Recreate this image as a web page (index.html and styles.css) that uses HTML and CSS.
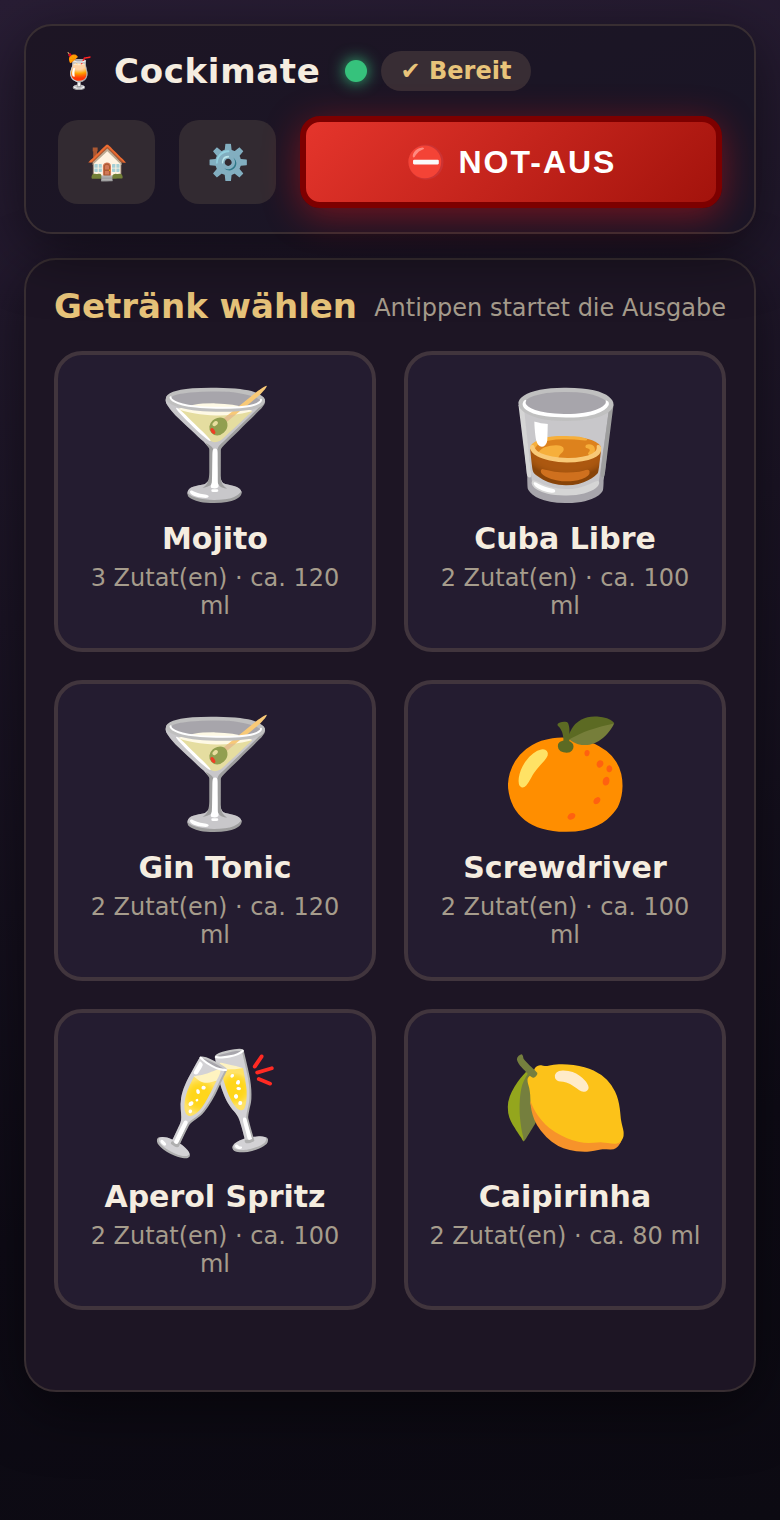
FILE: index.html
```html
<!DOCTYPE html>
<html lang="de">
<head>
  <meta charset="UTF-8">
  <meta name="viewport" content="width=device-width, initial-scale=1.0">
  <title>Cockimate</title>
  <link rel="stylesheet" href="styles.css">
</head>
<body>
  <header class="topbar">
    <div class="brand">
      <span class="logo">🍹</span>
      <h1>Cockimate</h1>
      <span class="dot"></span>
      <span class="status">✔ Bereit</span>
    </div>
    <div class="actions">
      <button class="icon-btn" type="button" aria-label="Startseite">🏠</button>
      <button class="icon-btn" type="button" aria-label="Einstellungen">⚙️</button>
      <button class="stop-btn" type="button">⛔ NOT-AUS</button>
    </div>
  </header>

  <main class="panel">
    <div class="panel-head">
      <h2>Getränk wählen</h2>
      <span class="hint">Antippen startet die Ausgabe</span>
    </div>

    <div class="drinks">
      <button class="drink" type="button">
        <span class="emoji">🍸</span>
        <span class="name">Mojito</span>
        <span class="info">3 Zutat(en) · ca. 120 ml</span>
      </button>
      <button class="drink" type="button">
        <span class="emoji">🥃</span>
        <span class="name">Cuba Libre</span>
        <span class="info">2 Zutat(en) · ca. 100 ml</span>
      </button>
      <button class="drink" type="button">
        <span class="emoji">🍸</span>
        <span class="name">Gin Tonic</span>
        <span class="info">2 Zutat(en) · ca. 120 ml</span>
      </button>
      <button class="drink" type="button">
        <span class="emoji">🍊</span>
        <span class="name">Screwdriver</span>
        <span class="info">2 Zutat(en) · ca. 100 ml</span>
      </button>
      <button class="drink" type="button">
        <span class="emoji">🥂</span>
        <span class="name">Aperol Spritz</span>
        <span class="info">2 Zutat(en) · ca. 100 ml</span>
      </button>
      <button class="drink" type="button">
        <span class="emoji">🍋</span>
        <span class="name">Caipirinha</span>
        <span class="info">2 Zutat(en) · ca. 80 ml</span>
      </button>
    </div>
  </main>
</body>
</html>
```
FILE: styles.css
```css
:root {
  --gold: #e8c47a;
  --text: #f5ede0;
  --muted: #a69c8c;
}
* {
  box-sizing: border-box;
}
body {
  margin: 0;
  padding: 24px;
  min-height: 100vh;
  display: flex;
  flex-direction: column;
  gap: 24px;
  font-family: "DejaVu Sans", sans-serif;
  color: var(--text);
  background: linear-gradient(170deg, #281d34 0%, #0e0b16 75%, #0c0a12 100%);
}
h1, h2 {
  margin: 0;
  font-size: 34px;
  line-height: 40px;
}
.topbar {
  position: relative;
  z-index: 1;
  display: flex;
  flex-direction: column;
  gap: 24px;
  padding: 24px 32px;
  border: 2px solid #382e32;
  border-radius: 28px;
  background: linear-gradient(160deg, #1d1524, #191526);
  box-shadow: 0 16px 60px rgba(0, 0, 0, 0.5);
}
.brand {
  display: flex;
  align-items: center;
  min-height: 42px;
}
.logo {
  width: 40px;
  margin-right: 16px;
  font-size: 34px;
  line-height: 40px;
}
h1 {
  letter-spacing: 0.02em;
}
.dot {
  width: 22px;
  height: 22px;
  margin: 0 14px 0 24px;
  border-radius: 50%;
  background: #36c27c;
  box-shadow: 0 0 16px #36c27c;
}
.status {
  padding: 0 20px;
  border-radius: 20px;
  font-size: 24px;
  font-weight: bold;
  line-height: 40px;
  color: var(--gold);
  background: #382d34;
}
.actions {
  display: flex;
  align-items: center;
  gap: 24px;
}
button {
  font-family: inherit;
  cursor: pointer;
}
.icon-btn {
  width: 97px;
  height: 84px;
  padding: 0;
  border: none;
  border-radius: 20px;
  font-size: 34px;
  color: var(--text);
  background: #322a31;
}
.stop-btn {
  flex: 1;
  height: 92px;
  border: 6px solid #7d0000;
  border-radius: 20px;
  font-family: "Liberation Sans", sans-serif;
  font-size: 32px;
  font-weight: bold;
  letter-spacing: 2px;
  color: #fff;
  background: linear-gradient(135deg, #e5352c, #a3130c);
  box-shadow: 0 8px 36px rgba(229, 20, 24, 0.45);
}
.panel {
  padding: 26px 28px 80px;
  border: 2px solid #382e32;
  border-radius: 32px;
  background: #1d1524;
  box-shadow: 0 16px 60px rgba(0, 0, 0, 0.5);
}
.panel-head {
  display: flex;
  justify-content: space-between;
  align-items: flex-end;
  margin-bottom: 25px;
}
h2 {
  color: var(--gold);
}
.hint {
  font-size: 24px;
  line-height: 36px;
  color: var(--muted);
}
.drinks {
  display: grid;
  grid-template-columns: 1fr 1fr;
  gap: 28px;
}
.drink {
  display: flex;
  flex-direction: column;
  align-items: center;
  min-height: 301px;
  padding: 24px 16px;
  border: 4px solid #41353d;
  border-radius: 28px;
  color: var(--text);
  background: #241c30;
}
.emoji {
  font-size: 105px;
  line-height: 132px;
}
.name {
  margin-top: 8px;
  font-size: 30px;
  font-weight: bold;
  line-height: 40px;
}
.info {
  margin-top: 5px;
  font-size: 24px;
  line-height: 28px;
  color: var(--muted);
}
```
